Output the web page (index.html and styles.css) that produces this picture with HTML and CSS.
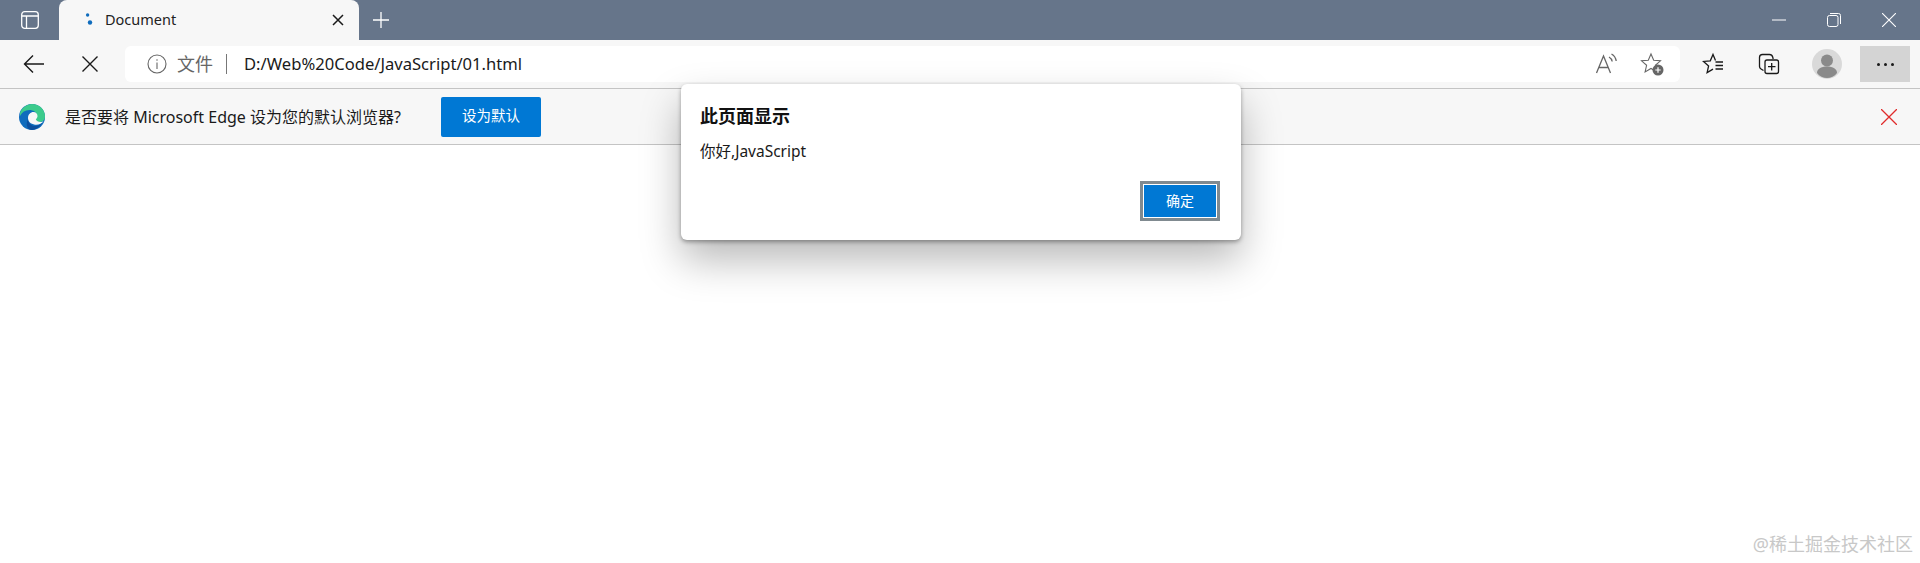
FILE: index.html
```html
<!DOCTYPE html>
<html lang="zh-CN">
<head>
    <meta charset="UTF-8">
    <title>Document</title>
    <link rel="stylesheet" href="styles.css">
</head>
<body>
    <!-- Barra de pestañas -->
    <div class="tabstrip">
        <button class="strip-btn tab-actions">
            <svg width="20" height="20" viewBox="0 0 20 20" fill="none" stroke="#fff" stroke-width="1.3"><rect x="1.7" y="1.7" width="16.6" height="16.6" rx="3"/><path d="M2 6h16M6.5 6v12"/></svg>
        </button>
        <div class="tab">
            <svg class="tab-icon" width="8" height="16" viewBox="0 0 8 16" fill="#0f6cbd"><circle cx="2.6" cy="3" r="1.7"/><circle cx="5" cy="10.5" r="2.2"/></svg>
            <span class="tab-title">Document</span>
            <svg width="12" height="12" viewBox="0 0 12 12" stroke="#1a1a1a" stroke-width="1.5"><path d="M1 1l10 10M11 1L1 11"/></svg>
        </div>
        <button class="strip-btn new-tab">
            <svg width="18" height="18" viewBox="0 0 18 18" stroke="#fff" stroke-width="1.3"><path d="M9 1v16M1 9h16"/></svg>
        </button>
        <div class="window-controls">
            <svg width="14" height="14" viewBox="0 0 14 14" stroke="#fff" stroke-width="1"><path d="M0 7h14"/></svg>
            <svg width="14" height="14" viewBox="0 0 14 14" fill="none" stroke="#fff" stroke-width="1"><rect x=".5" y="2.5" width="10.5" height="11" rx="2"/><path d="M3 .5h8.5a2 2 0 0 1 2 2V11"/></svg>
            <svg width="14" height="14" viewBox="0 0 14 14" stroke="#fff" stroke-width="1.1"><path d="M0 0l14 14M14 0L0 14"/></svg>
        </div>
    </div>

    <!-- Barra de herramientas -->
    <div class="toolbar">
        <button class="nav-btn">
            <svg width="22" height="20" viewBox="0 0 22 20" fill="none" stroke="#1a1a1a" stroke-width="1.4"><path d="M21 10H1.5M10 1.5L1.5 10l8.5 8.5"/></svg>
        </button>
        <button class="nav-btn stop-btn">
            <svg width="16" height="16" viewBox="0 0 16 16" stroke="#1a1a1a" stroke-width="1.4"><path d="M.5.5l15 15M15.500.5l-15 15"/></svg>
        </button>
        <div class="address">
            <svg class="info-icon" width="20" height="20" viewBox="0 0 20 20" fill="none" stroke="#666" stroke-width="1.1"><circle cx="10" cy="10" r="9"/><path d="M10 8.500v6.500M10 5.200v1.600"/></svg>
            <span class="scheme">文件</span>
            <span class="divider"></span>
            <span class="url">D:/Web%20Code/JavaScript/01.html</span>
            <svg class="addr-read" width="24" height="24" viewBox="0 0 24 24" fill="none" stroke="#666" stroke-width="1.300"><path d="M1.500 21L8.500 4 15.500 21M4 15.500h9M14 5c1.700.9 2.800 2.400 3.200 4.500M16.500 2c2.600 1.400 4.200 3.800 4.700 7"/></svg>
            <svg class="addr-fav" width="24" height="24" viewBox="0 0 24 24"><path d="M11 2l2.700 6.200 6.800.6-5.100 4.500 1.500 6.700L11 16.500l-5.900 3.500 1.500-6.700L1.500 8.800l6.800-.6z" fill="none" stroke="#666" stroke-width="1.100"/><circle cx="18" cy="18" r="5.500" fill="#666"/><path d="M18 15.300v5.400M15.300 18h5.400" stroke="#fff" stroke-width="1.200"/></svg>
        </div>
        <div class="tools">
            <svg class="tool" width="24" height="24" viewBox="0 0 24 24" fill="none" stroke="#1a1a1a" stroke-width="1.300"><path d="M13.500 8.500L11 2.500 8.300 8.800l-6.800.6 5.100 4.500-1.500 6.700 5.900-3.500"/><path d="M13.500 10h7.500M13.500 13.500h7.500M13.500 17h7.500"/></svg>
            <svg class="tool" width="24" height="24" viewBox="0 0 24 24" fill="none" stroke="#1a1a1a" stroke-width="1.300"><path d="M6.500 18.500L4 17c-1-.6-1.500-1.500-1.500-2.500V5.500c0-1.700 1.300-3 3-3h7c1.500 0 2.800 1 3.200 2.500l.5 2"/><rect x="8" y="8" width="13.500" height="13.500" rx="2"/><path d="M14.700 11v7.500M11 14.700h7.500"/></svg>
            <svg class="avatar" width="30" height="30" viewBox="0 0 30 30"><circle cx="15" cy="15" r="15" fill="#d9d9d9"/><circle cx="15" cy="11.500" r="6" fill="#8a8a8a"/><path d="M5 24c0-4 4-6.500 10-6.500S25 20 25 24c-2.500 3.300-6 5-10 5s-7.500-1.700-10-5z" fill="#8a8a8a"/></svg>
            <button class="more-btn"><i></i><i></i><i></i></button>
        </div>
    </div>

    <!-- Barra de información -->
    <div class="infobar">
        <svg class="edge-logo" width="26" height="26" viewBox="0 0 26 26">
            <circle cx="13" cy="13" r="13" fill="#0f6cbd"/>
            <path d="M1 9C3 3.500 8 0 13 0c7 0 13 5 13 12.500 0 3-2 5.500-5.500 5.500-2.500 0-4-1-4.500-2.500 1.500-1 2-2.500 2-3.500C18 8 14 6 10.500 6 6 6 3 8 1 12z" fill="#3ccb8c"/>
            <path d="M9 14c0-3.500 2.500-6 5.500-6 2.500 0 4 1.800 4 4 0 1.300-.7 2.500-1.700 3.300.7 1.700 2.700 2.700 4.700 2.700 1 0 2.300-.300 3-.800-1.800 2.500-5 4-8.500 3.500C11.500 20 9 17.500 9 14z" fill="#f7f7f7"/>
            <path d="M9 15c0 4 3.500 7.500 8 7 2.500-.3 5-1.500 6.500-3.500-2 3.500-6 7.500-10.500 7.500-2 0-4-1-4.500-2.500C7 20 8 17 9 15z" fill="#0b4f9e"/>
        </svg>
        <span class="info-text">是否要将 Microsoft Edge 设为您的默认浏览器?</span>
        <button class="default-btn">设为默认</button>
        <svg class="info-close" width="16" height="16" viewBox="0 0 16 16" stroke="#e02b2b" stroke-width="1.300"><path d="M0 0l16 16M16 0L0 16"/></svg>
    </div>

    <!-- Diálogo alert -->
    <div class="dialog">
        <div class="dialog-title">此页面显示</div>
        <div class="dialog-msg">你好,JavaScript</div>
        <div class="dialog-actions">
            <button class="ok-btn">确定</button>
        </div>
    </div>

    <div class="watermark">@稀土掘金技术社区</div>
</body>
</html>
```
FILE: styles.css
```css
* {
    margin: 0;
    padding: 0;
    box-sizing: border-box;
}

html, body {
    height: 100vh;
    width: 100vw;
    overflow: hidden;
    background: #fff;
    font-family: "Noto Sans", "Noto Sans CJK SC", sans-serif;
    color: #1a1a1a;
}

button {
    border: none;
    background: none;
    font-family: inherit;
    display: flex;
    align-items: center;
    justify-content: center;
}

svg {
    flex: none;
    display: block;
}

.tabstrip {
    height: 40px;
    background: #66758a;
    display: flex;
    align-items: flex-end;
}

.strip-btn {
    height: 40px;
}

.tab-actions {
    width: 59px;
}

.tab {
    width: 300px;
    height: 40px;
    background: #f7f7f7;
    border-radius: 8px 8px 0 0;
    display: flex;
    align-items: center;
    padding: 0 15px 0 26px;
}

.tab-icon {
    margin-right: 12px;
}

.tab-title {
    flex: 1;
    font-size: 14.500px;
    padding-bottom: 2px;
    color: #222;
}

.new-tab {
    width: 44px;
}

.window-controls {
    margin-left: auto;
    height: 40px;
    display: flex;
    align-items: center;
    gap: 41px;
    padding-right: 24px;
}

.toolbar {
    height: 49px;
    background: #f7f7f7;
    border-bottom: 1px solid #c4c4c4;
    display: flex;
    align-items: center;
    padding-left: 23px;
}

.nav-btn {
    width: 22px;
    height: 36px;
}

.stop-btn {
    margin-left: 34px;
    width: 22px;
}

.address {
    margin-left: 24px;
    width: 1555px;
    height: 36px;
    background: #fff;
    border-radius: 6px;
    display: flex;
    align-items: center;
    padding-left: 22px;
}

.scheme {
    margin-left: 10px;
    font-size: 18px;
    padding-bottom: 2px;
    color: #666;
}

.divider {
    width: 1px;
    height: 20px;
    background: #777;
    margin: 0 17px 0 13px;
}

.url {
    flex: 1;
    font-size: 16.600px;
    padding-bottom: 2px;
    color: #1a1a1a;
}

.addr-fav {
    margin: 0 16px 0 21px;
}

.tools {
    display: flex;
    align-items: center;
    margin-left: 22px;
}

.tool {
    margin-right: 31px;
}

.avatar {
    margin-right: 18px;
}

.more-btn {
    width: 50px;
    height: 36px;
    background: #d4d4d4;
    gap: 4px;
}

.more-btn i {
    width: 3px;
    height: 3px;
    border-radius: 50%;
    background: #1a1a1a;
}

.infobar {
    height: 56px;
    background: #f7f7f7;
    border-bottom: 1px solid #c4c4c4;
    display: flex;
    align-items: center;
    padding: 0 23px 0 19px;
}

.info-text {
    margin-left: 20px;
    width: 376px;
    font-size: 16px;
    padding-bottom: 2px;
    color: #1a1a1a;
}

.default-btn {
    width: 100px;
    height: 40px;
    background: #0078d4;
    color: #fff;
    font-size: 14.500px;
    padding-bottom: 4px;
    border-radius: 2px;
}

.info-close {
    margin-left: auto;
}

.dialog {
    position: absolute;
    top: 84px;
    left: 681px;
    width: 560px;
    height: 156px;
    background: #fff;
    border-radius: 6px;
    padding: 20px 20px 0 19px;
    box-shadow: 0 2px 4px rgba(0, 0, 0, 0.35), 0 20px 40px rgba(0, 0, 0, 0.28);
}

.dialog-title {
    font-size: 18px;
    line-height: 24px;
    font-weight: 700;
    color: #111;
}

.dialog-msg {
    margin-top: 13px;
    font-size: 15.500px;
    line-height: 20px;
    color: #1a1a1a;
}

.dialog-actions {
    display: flex;
    justify-content: flex-end;
    margin-top: 21px;
    padding-right: 2px;
}

.ok-btn {
    width: 78px;
    height: 38px;
    background: #0078d4;
    color: #fff;
    font-size: 14px;
    padding-bottom: 3px;
    border: 3px solid #fff;
    outline: 3px solid #808a90;
    outline-offset: -2px;
}

.watermark {
    position: absolute;
    right: 7px;
    bottom: 7px;
    font-size: 18px;
    color: #c8c8c8;
}
```
